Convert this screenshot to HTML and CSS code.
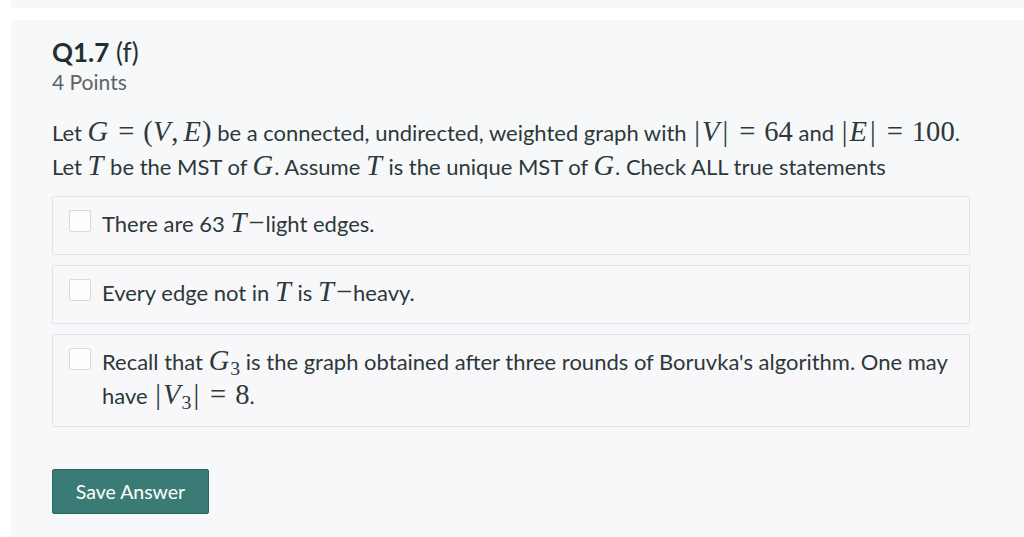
FILE: index.html
```html
<!DOCTYPE html>
<html>
<head>
<meta charset="utf-8">
<link rel="stylesheet" href="styles.css">
</head>
<body>
<div class="topstrip"></div>
<section class="question">
  <h2 class="q-title"><strong>Q1.7</strong> (f)</h2>
  <div class="q-points">4 Points</div>
  <p class="q-text">Let <span class="m">G</span><span class="rel">=</span><span class="r">(</span><span class="m">V</span><span class="r pun">,</span><span class="m">E</span><span class="r">)</span> be a connected, undirected, weighted graph with <span class="r bar">|</span><span class="m">V</span><span class="r bar">|</span><span class="rel">=</span><span class="r">64</span> and <span class="r bar">|</span><span class="m">E</span><span class="r bar">|</span><span class="rel">=</span><span class="r">100</span>. Let <span class="m">T</span> be the MST of <span class="m">G</span>. Assume <span class="m">T</span> is the unique MST of <span class="m">G</span>. Check ALL true statements</p>
  <div class="options">
    <label class="option"><span class="box"></span><span class="opt-text">There are 63 <span class="m">T</span><span class="r bin">−</span>light edges.</span></label>
    <label class="option"><span class="box"></span><span class="opt-text">Every edge not in <span class="m">T</span> is <span class="m">T</span><span class="r bin">−</span>heavy.</span></label>
    <label class="option"><span class="box"></span><span class="opt-text">Recall that <span class="m">G</span><sub class="r">3</sub> is the graph obtained after three rounds of Boruvka's algorithm. One may have <span class="r bar">|</span><span class="m">V</span><sub class="r">3</sub><span class="r bar">|</span><span class="rel">=</span><span class="r">8</span>.</span></label>
  </div>
  <button class="save">Save Answer</button>
</section>
</body>
</html>
```

FILE: styles.css
```css
html, body {
  margin: 0;
  padding: 0;
  background: #ffffff;
  font-family: "Lato", "Open Sans", "Liberation Sans", sans-serif;
  color: #2c3839;
  overflow: hidden;
}
.topstrip {
  margin-left: 11px;
  height: 8px;
  background: #f7f8fa;
}
.question {
  box-sizing: border-box;
  margin: 12px 0 0 11px;
  background: #f7f8fa;
  padding: 18px 54px 20px 41px;
  height: 517px;
}
.q-title {
  margin: 0;
  font-size: 26px;
  line-height: 28px;
  font-weight: 400;
  color: #242f30;
}
.q-title strong { font-weight: 700; }
.q-points {
  font-size: 21px;
  line-height: 24px;
  color: #5c6466;
  margin-top: 4px;
}
.q-text {
  margin: 22px 0 0 0;
  font-size: 22px;
  line-height: 34px;
}
.m {
  font-family: "Liberation Serif", "DejaVu Serif", serif;
  font-style: italic;
  font-size: 1.3em;
  line-height: 1;
  padding-right: 1px;
}
.r, .rel {
  font-family: "Liberation Serif", "DejaVu Serif", serif;
  font-size: 1.3em;
  line-height: 1;
}
.rel {
  margin: 0 9px;
}
.bar {
  margin: 0 2px;
}
.pun {
  margin-right: 5px;
}
.bin {
  margin: 0 1px;
}
sub.r {
  font-size: 0.9em;
  line-height: 0.8;
  vertical-align: -5px;
}
.options {
  margin-top: 12px;
  display: flex;
  flex-direction: column;
  gap: 10px;
}
.option {
  display: flex;
  align-items: flex-start;
  gap: 11px;
  border: 1px solid #e1e4e7;
  border-radius: 2px;
  background: #f8f8fa;
  padding: 10px 16px 13px 16px;
  font-size: 22px;
  line-height: 34px;
}
.box {
  flex: none;
  box-sizing: border-box;
  width: 22px;
  height: 22px;
  margin-top: 3px;
  border: 1px solid #d5dbe1;
  border-radius: 2px;
  background: #fdfdfe;
}
.opt-text { display: block; }
.save {
  margin-top: 42px;
  display: block;
  width: 157px;
  height: 45px;
  background: #3b7b76;
  color: #ffffff;
  border: 1px solid #2e6660;
  border-radius: 2px;
  font-family: "Lato", "Open Sans", "Liberation Sans", sans-serif;
  font-size: 19.5px;
  padding: 0;
}
```
